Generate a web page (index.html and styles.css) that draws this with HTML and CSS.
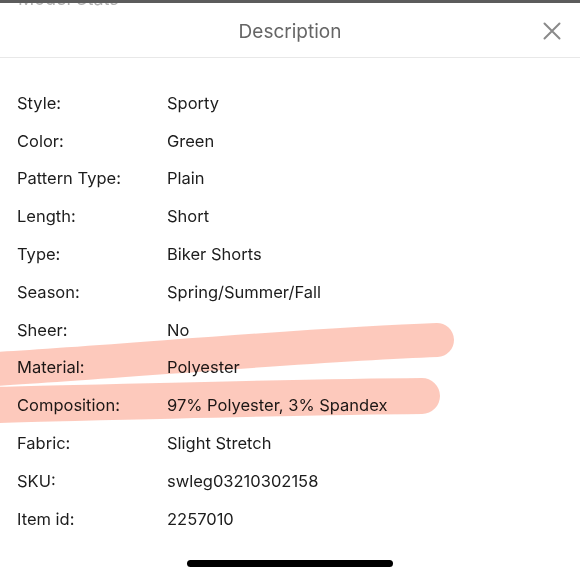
FILE: index.html
```html
<!DOCTYPE html>
<html>
<head>
<meta charset="utf-8">
<link rel="stylesheet" href="styles.css">
</head>
<body>
<div class="screen">
  <div class="peek"><span class="peek-text">Model Stats</span></div>
  <div class="sheet">
    <header class="header">
      <h1 class="title">Description</h1>
      <button class="close" aria-label="Close">
        <svg width="18" height="18" viewBox="0 0 18 18"><path d="M1.5 1.5 L16.5 16.5 M16.5 1.5 L1.5 16.5" stroke="#8a8a8a" stroke-width="2" stroke-linecap="round" fill="none"/></svg>
      </button>
    </header>
    <div class="rows">
      <div class="row"><span class="label">Style:</span><span class="value">Sporty</span></div>
      <div class="row"><span class="label">Color:</span><span class="value">Green</span></div>
      <div class="row"><span class="label">Pattern Type:</span><span class="value">Plain</span></div>
      <div class="row"><span class="label">Length:</span><span class="value">Short</span></div>
      <div class="row"><span class="label">Type:</span><span class="value">Biker Shorts</span></div>
      <div class="row"><span class="label">Season:</span><span class="value">Spring/Summer/Fall</span></div>
      <div class="row"><span class="label">Sheer:</span><span class="value">No</span></div>
      <div class="row"><span class="label">Material:</span><span class="value">Polyester</span></div>
      <div class="row"><span class="label">Composition:</span><span class="value">97% Polyester, 3% Spandex</span></div>
      <div class="row"><span class="label">Fabric:</span><span class="value">Slight Stretch</span></div>
      <div class="row"><span class="label">SKU:</span><span class="value">swleg03210302158</span></div>
      <div class="row"><span class="label">Item id:</span><span class="value">2257010</span></div>
    </div>
    <div class="home-bar"></div>
  </div>
  <svg class="marker" width="580" height="580" viewBox="0 0 580 580">
    <path d="M-5 369 C 120 362, 300 345, 437 340" stroke="#fb8f72" stroke-opacity="0.48" stroke-width="34" stroke-linecap="round" fill="none"/>
    <path d="M-5 405 C 120 402, 300 397, 422 396" stroke="#fb8f72" stroke-opacity="0.48" stroke-width="36" stroke-linecap="round" fill="none"/>
  </svg>
</div>
</body>
</html>
```
FILE: styles.css
```css
* { box-sizing: border-box; margin: 0; padding: 0; }
html, body { width: 580px; height: 580px; overflow: hidden; background: #fff; }
body { font-family: Inter, "Liberation Sans", sans-serif; color: #1c1c1c; }
.screen { position: relative; width: 580px; height: 580px; }
.peek {
  height: 8px;
  overflow: hidden;
  border-top: 3px solid #5c5c5c;
  padding-left: 18px;
}
.peek-text {
  display: block;
  margin-top: -13px;
  font-size: 18px;
  color: #b0b0b0;
  line-height: 18px;
}
.sheet { display: flex; flex-direction: column; }
.header {
  height: 50px;
  border-bottom: 1px solid #e8e8e8;
  display: flex;
  align-items: center;
  justify-content: center;
  position: relative;
}
.title {
  font-weight: 400;
  font-size: 19px;
  color: #666;
  margin-top: -2px;
}
.close {
  position: absolute;
  right: 19px;
  top: 14px;
  border: none;
  background: none;
  width: 18px;
  height: 18px;
  display: flex;
}
.rows { padding: 26px 0 0 17px; display: flex; flex-direction: column; }
.row {
  height: 37.8px;
  display: flex;
  align-items: center;
  font-size: 16.5px;
}
.label { width: 150px; }
.home-bar {
  width: 206px;
  height: 7px;
  border-radius: 3.5px;
  background: #000;
  margin: 22px 0 0 187px;
}
.marker { position: absolute; left: 0; top: 0; pointer-events: none; mix-blend-mode: multiply; }
```
